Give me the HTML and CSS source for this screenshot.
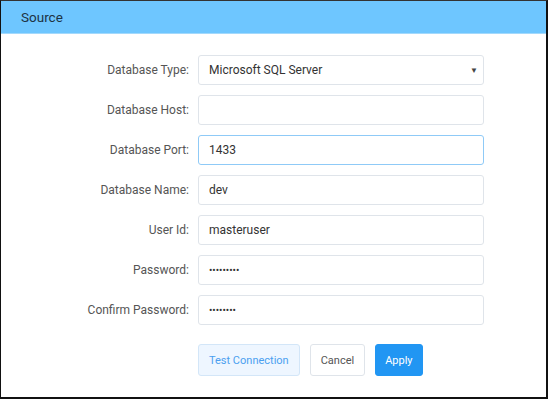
FILE: index.html
```html
<!DOCTYPE html>
<html lang="en">
<head>
    <meta charset="UTF-8">
    <title>Source</title>
    <link rel="stylesheet" href="styles.css">
</head>
<body>
    <div class="dialog">
        <div class="dialog-header">Source</div>
        <form class="source-form">
            <label for="db-type">Database Type:</label>
            <div class="select-box" id="db-type">
                <span>Microsoft SQL Server</span>
                <span class="caret">&#9660;</span>
            </div>

            <label for="db-host">Database Host:</label>
            <input type="text" id="db-host" value="">

            <label for="db-port">Database Port:</label>
            <input type="text" id="db-port" class="focused" value="1433">

            <label for="db-name">Database Name:</label>
            <input type="text" id="db-name" value="dev">

            <label for="user-id">User Id:</label>
            <input type="text" id="user-id" value="masteruser">

            <label for="password">Password:</label>
            <input type="password" id="password" value="secret123">

            <label for="confirm">Confirm Password:</label>
            <input type="password" id="confirm" value="secret12">

            <div class="actions">
                <button type="button" class="btn btn-test">Test Connection</button>
                <button type="button" class="btn btn-cancel">Cancel</button>
                <button type="button" class="btn btn-apply">Apply</button>
            </div>
        </form>
    </div>
</body>
</html>
```

FILE: styles.css
```css
body {
    margin: 0;
    padding: 0;
    background-color: #fff;
    font-family: Roboto, "Liberation Sans", sans-serif;
}
.dialog {
    width: 548px;
    height: 399px;
    box-sizing: border-box;
    border-top: 1px solid #333;
    border-left: 1px solid #111;
    border-right: 2px solid #111;
    border-bottom: 2px solid #111;
    background-color: #fff;
}
.dialog-header {
    height: 32px;
    line-height: 33px;
    padding-left: 20px;
    background-color: #6ec6ff;
    border-bottom: 1px solid #a3d9fc;
    color: #1d3344;
    font-size: 13.5px;
}
.source-form {
    display: grid;
    grid-template-columns: 188px 286px;
    column-gap: 9px;
    row-gap: 10px;
    align-items: center;
    padding-top: 21px;
}
.source-form label {
    text-align: right;
    font-size: 12px;
    color: #555;
}
.source-form input,
.select-box {
    box-sizing: border-box;
    height: 30px;
    width: 286px;
    margin: 0;
    padding: 0 10px;
    border: 1px solid #dfe4ea;
    border-radius: 3px;
    font-family: Roboto, "Liberation Sans", sans-serif;
    font-size: 12px;
    color: #333;
    background-color: #fff;
    outline: none;
}
.source-form input[type="password"] {
    font-size: 10px;
    letter-spacing: 0;
}
.source-form input.focused {
    border-color: #8fcaf7;
}
.select-box {
    display: flex;
    align-items: center;
    justify-content: space-between;
}
.select-box .caret {
    font-size: 8px;
    color: #444;
    margin-right: -5px;
}
.actions {
    grid-column: 2;
    display: flex;
    gap: 10px;
    margin-top: 9px;
}
.btn {
    height: 32px;
    padding: 0 10px;
    border-radius: 3px;
    font-family: Roboto, "Liberation Sans", sans-serif;
    font-size: 11px;
    cursor: pointer;
}
.btn-test {
    background-color: #eef6ff;
    border: 1px solid #d3e6f8;
    color: #4b9ff0;
}
.btn-cancel {
    background-color: #fff;
    border: 1px solid #dfe4ea;
    color: #555;
}
.btn-apply {
    background-color: #2196f3;
    border: 1px solid #2196f3;
    color: #fff;
    padding: 0 9px;
}
```
